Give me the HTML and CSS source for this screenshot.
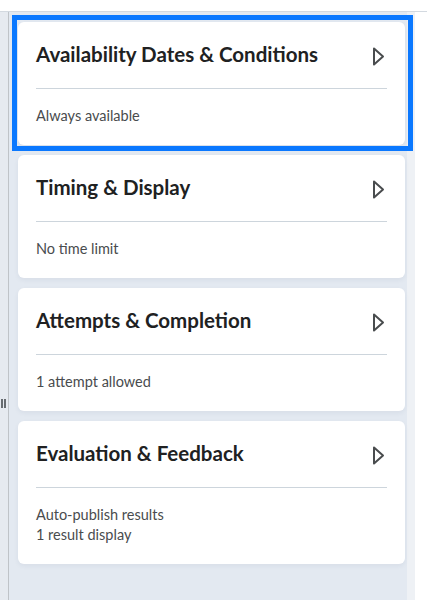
FILE: index.html
```html
<!DOCTYPE html>
<html lang="en">
<head>
<meta charset="utf-8">
<title>Quiz settings</title>
<link rel="stylesheet" href="styles.css">
</head>
<body>
<div class="topbar"></div>
<div class="layout">
  <div class="splitter">
    <div class="grip"><span></span><span></span></div>
  </div>
  <main class="panel">
    <section class="card focused">
      <div class="card-head">
        <h3 class="card-title">Availability Dates &amp; Conditions</h3>
        <svg class="chev" viewBox="0 0 18 20" width="18" height="20"><path d="M5 2.5 L14 10.5 L5 18.5 Z" fill="none" stroke="#494c4e" stroke-width="2" stroke-linejoin="round"/></svg>
      </div>
      <div class="divider"></div>
      <div class="summary"><div>Always available</div></div>
    </section>
    <section class="card">
      <div class="card-head">
        <h3 class="card-title">Timing &amp; Display</h3>
        <svg class="chev" viewBox="0 0 18 20" width="18" height="20"><path d="M5 2.5 L14 10.5 L5 18.5 Z" fill="none" stroke="#494c4e" stroke-width="2" stroke-linejoin="round"/></svg>
      </div>
      <div class="divider"></div>
      <div class="summary"><div>No time limit</div></div>
    </section>
    <section class="card">
      <div class="card-head">
        <h3 class="card-title">Attempts &amp; Completion</h3>
        <svg class="chev" viewBox="0 0 18 20" width="18" height="20"><path d="M5 2.5 L14 10.5 L5 18.5 Z" fill="none" stroke="#494c4e" stroke-width="2" stroke-linejoin="round"/></svg>
      </div>
      <div class="divider"></div>
      <div class="summary"><div>1 attempt allowed</div></div>
    </section>
    <section class="card">
      <div class="card-head">
        <h3 class="card-title">Evaluation &amp; Feedback</h3>
        <svg class="chev" viewBox="0 0 18 20" width="18" height="20"><path d="M5 2.5 L14 10.5 L5 18.5 Z" fill="none" stroke="#494c4e" stroke-width="2" stroke-linejoin="round"/></svg>
      </div>
      <div class="divider"></div>
      <div class="summary"><div>Auto-publish results</div><div>1 result display</div></div>
    </section>
  </main>
  <div class="edge"></div>
</div>
</body>
</html>
```
FILE: styles.css
```css
* { box-sizing: border-box; }
html, body { margin: 0; padding: 0; height: 100%; }
body {
  font-family: Lato, "Noto Sans", sans-serif;
  background: #ffffff;
  overflow: hidden;
}
.topbar {
  height: 12px;
  background: #ffffff;
  border-bottom: 1px solid #d3d9e0;
}
.layout {
  display: flex;
  height: calc(100% - 12px);
}
.splitter {
  width: 9px;
  flex: 0 0 9px;
  background: #e6eaf0;
  border-right: 1px solid #bfc3c8;
  display: flex;
  flex-direction: column;
  justify-content: flex-start;
  padding-top: 387px;
  align-items: flex-start;
}
.grip {
  display: flex;
  gap: 1px;
  padding-left: 1px;
}
.grip span {
  width: 2px;
  height: 9px;
  background: #676b70;
}
.panel {
  width: 398px;
  flex: 0 0 398px;
  background: #e3e9f1;
  padding: 10px 2px 0 9px;
  display: flex;
  flex-direction: column;
  gap: 10px;
}
.edge {
  width: 8px;
  flex: 0 0 8px;
  background: #eef1f5;
}
.card {
  position: relative;
  background: #ffffff;
  border-radius: 6px;
  padding: 17px 18px 19px;
  box-shadow: 0 2px 5px rgba(30, 50, 80, 0.06);
}
.card.focused::after {
  content: "";
  position: absolute;
  top: -7px;
  left: -6px;
  right: -8px;
  bottom: -6px;
  border: 5px solid #0a78ff;
  pointer-events: none;
}
.card-head {
  display: flex;
  align-items: center;
  justify-content: space-between;
  height: 30px;
}
.card-title {
  margin: 0;
  font-size: 20.5px;
  line-height: 30px;
  font-weight: 700;
  color: #202122;
}
.chev {
  display: block;
  margin-right: 0;
  margin-top: 3px;
}
.divider {
  height: 1px;
  background: #cdd5dc;
  margin-top: 19px;
}
.summary {
  margin-top: 17px;
  font-size: 14.5px;
  line-height: 20px;
  color: #494c4e;
}
```
